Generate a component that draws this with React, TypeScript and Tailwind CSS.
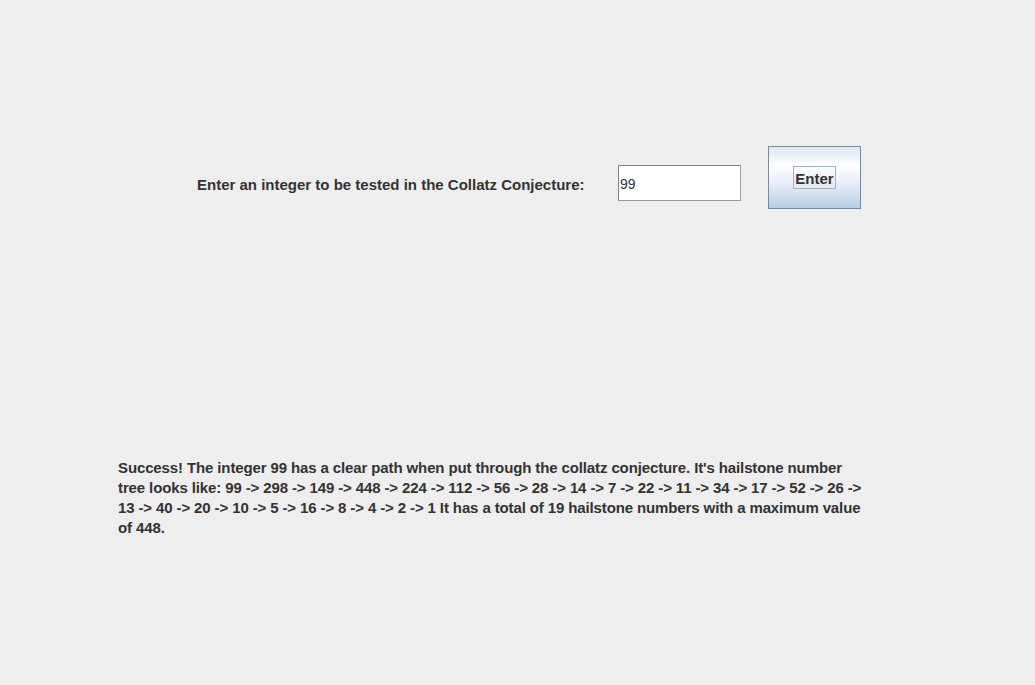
const arrow = "-\u2060>";
const seq = [99, 298, 149, 448, 224, 112, 56, 28, 14, 7, 22, 11, 34, 17, 52, 26, 13, 40, 20, 10, 5, 16, 8, 4, 2, 1];
const chain = seq.map((n, i) => (i < seq.length - 1 ? `${n} ${arrow} ` : `${n} `)).join("");

export default function App() {
  return (
    <div className="w-[1035px] h-[685px] bg-[#eeeeee] text-[#333333] font-['Liberation_Sans',Arial,sans-serif] flex flex-col">
      <div className="flex items-start pt-[146px] pl-[197px]">
        <div className="mt-[30px] text-[15px] font-bold leading-[18px] w-[421px]">
          Enter an integer to be tested in the Collatz Conjecture:
        </div>
        <div className="mt-[19px] w-[123px] h-[36px] bg-white border border-[#858585] border-r-[#a0a0a0] border-b-[#999999] flex items-center pl-[1px] pt-[2px] text-[14px] text-[#333333]">
          99
        </div>
        <div className="ml-[27px] w-[93px] h-[63px] border border-[#7a8a99] bg-[linear-gradient(to_bottom,#dce7f3_0%,#ffffff_30%,#e6eef6_60%,#b8cee4_100%)] flex items-center justify-center">
          <div className="mt-[-1px] border border-[#a3b3c4] px-[1px] h-[23px] flex items-center pt-[3px] text-[15px] leading-[18px] font-bold text-[#333333]">
            Enter
          </div>
        </div>
      </div>
      <p className="mt-[249px] ml-[118px] w-[752px] text-[15px] font-bold leading-[20px] tracking-[-0.12px]">
        {"Success! The integer 99 has a clear path when put through the collatz conjecture. It's hailstone number tree looks like: " +
          chain +
          "It has a total of 19 hailstone numbers with a maximum value of 448."}
      </p>
    </div>
  );
}
